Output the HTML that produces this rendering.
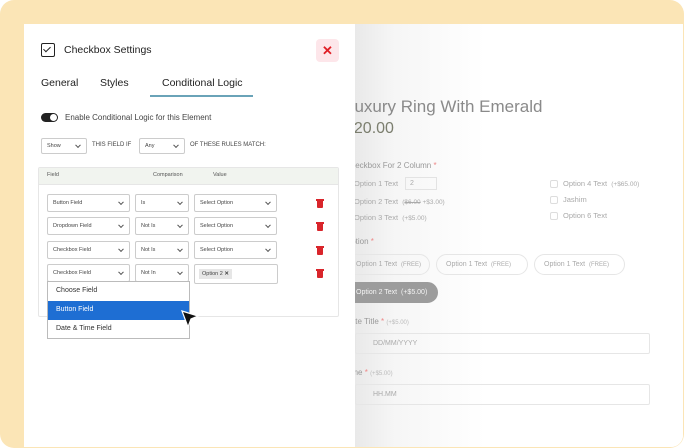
<!DOCTYPE html>
<html><head><meta charset="utf-8"><style>
*{margin:0;padding:0;box-sizing:border-box}
body{width:684px;height:448px;overflow:hidden;background:#fff;font-family:"Liberation Sans",sans-serif;position:relative}
.bg{position:absolute;left:0;top:0;width:684px;height:448px;background:#fbe5b6;border-radius:14px}
.card{position:absolute;left:24px;top:24px;width:659px;height:423px;background:#fff;border-radius:0 0 12px 0;overflow:hidden}
.right{position:absolute;left:331px;top:0;width:328px;height:423px;background:linear-gradient(90deg,#e9e9e9 0,#f6f6f6 40px,#fff 130px)}
.a{position:absolute;white-space:nowrap}
.g{color:#aaa;font-size:7.5px}
.left{position:absolute;left:0;top:0;width:331px;height:423px;background:#fff}
.sel{position:absolute;border:1px solid #ccc;border-radius:2px;background:#fff;font-size:5.5px;color:#444;padding-left:5px;display:flex;align-items:center}
.sel:after{content:"";position:absolute;right:6px;top:50%;width:3px;height:3px;border-right:1px solid #555;border-bottom:1px solid #555;transform:translateY(-70%) rotate(45deg)}
.tr{position:absolute;left:293px;width:6px;height:7px;background:#d9252b;border-radius:0 0 1px 1px}
.tr:before{content:"";position:absolute;left:-1px;top:-2px;width:8px;height:1.5px;background:#d9252b}
.pill{position:absolute;height:21px;border:1px solid #e6e6e6;border-radius:11px;font-size:7px;color:#aaa;display:flex;align-items:center;padding-left:9px}
.inp{position:absolute;left:0;width:295px;height:21px;border:1px solid #e6e6e6;border-radius:2px;font-size:7px;color:#aaa;display:flex;align-items:center;padding-left:12px}
.cb{position:absolute;width:8px;height:8px;border:1px solid #ddd;border-radius:2px}
</style></head><body>
<div class="bg"></div>
<div class="card">
 <div class="right">
  <div class="a" style="left:-10px;top:73px;font-size:17px;color:#8a8a8a">Luxury Ring With Emerald</div>
  <div class="a" style="left:-10px;top:96px;font-size:16px;color:#7b7e6e">$20.00</div>
  <div class="a" style="left:-10px;top:137px;font-size:8px;color:#999">Checkbox For 2 Column <span style="color:#e88">*</span></div>
  <div class="a g" style="left:-1px;top:155px">Option 1 Text</div>
  <div class="a" style="left:50px;top:153px;width:32px;height:13px;border:1px solid #e3e3e3;font-size:7px;color:#aaa;padding:2px 4px">2</div>
  <div class="a g" style="left:-1px;top:173px">Option 2 Text &nbsp;<span style="font-size:6.5px">(<s>$6.00</s> +$3.00)</span></div>
  <div class="a g" style="left:-1px;top:189px">Option 3 Text &nbsp;<span style="font-size:6.5px">(+$5.00)</span></div>
  <div class="cb" style="left:195px;top:156px"></div><div class="a g" style="left:208px;top:155px">Option 4 Text &nbsp;<span style="font-size:6.5px">(+$65.00)</span></div>
  <div class="cb" style="left:195px;top:172px"></div><div class="a g" style="left:208px;top:171px">Jashim</div>
  <div class="cb" style="left:195px;top:188px"></div><div class="a g" style="left:208px;top:187px">Option 6 Text</div>
  <div class="a" style="left:-10px;top:213px;font-size:8px;color:#999">Option <span style="color:#e88">*</span></div>
  <div class="pill" style="left:-30px;top:230px;width:105px;padding-left:30px">Option 1 Text &nbsp;<span style="font-size:6px">(FREE)</span></div>
  <div class="pill" style="left:81px;top:230px;width:92px">Option 1 Text &nbsp;<span style="font-size:6px">(FREE)</span></div>
  <div class="pill" style="left:179px;top:230px;width:91px">Option 1 Text &nbsp;<span style="font-size:6px">(FREE)</span></div>
  <div class="pill" style="left:-30px;top:258px;width:113px;padding-left:30px;background:#9c9c9c;border-color:#9c9c9c;color:#f4f4f4">Option 2 Text &nbsp;(+$5.00)</div>
  <div class="a" style="left:-10px;top:293px;font-size:8px;color:#999">Date Title <span style="color:#e88">*</span> <span style="font-size:6px;color:#bbb">(+$5.00)</span></div>
  <div class="inp" style="top:309px;padding-left:17px">DD/MM/YYYY</div>
  <div class="a" style="left:-10px;top:344px;font-size:8px;color:#999">Time <span style="color:#e88">*</span> <span style="font-size:6px;color:#bbb">(+$5.00)</span></div>
  <div class="inp" style="top:360px;padding-left:17px">HH.MM</div>
 </div>
 <div class="left">
  <div class="a" style="left:17px;top:19px;width:14px;height:14px;border:1.5px solid #222;border-radius:2px"><div style="position:absolute;left:3px;top:1px;width:4px;height:7px;border-right:1.5px solid #222;border-bottom:1.5px solid #222;transform:rotate(45deg)"></div></div>
  <div class="a" style="left:40px;top:20px;font-size:10.5px;color:#222">Checkbox Settings</div>
  <div class="a" style="left:292px;top:15px;width:23px;height:23px;background:#fde6ea;border-radius:4px;color:#e01f26;font-size:13px;font-weight:bold;text-align:center;line-height:23px">✕</div>
  <div class="a" style="left:17px;top:53px;font-size:10.5px;color:#222">General</div>
  <div class="a" style="left:76px;top:53px;font-size:10.5px;color:#222">Styles</div>
  <div class="a" style="left:138px;top:53px;font-size:10.5px;color:#222">Conditional Logic</div>
  <div class="a" style="left:126px;top:71px;width:103px;height:2px;background:#6aa3b8"></div>
  <div class="a" style="left:17px;top:89px;width:17px;height:9px;background:#222;border-radius:5px"><div style="position:absolute;right:1px;top:1px;width:7px;height:7px;background:#fff;border-radius:50%"></div></div>
  <div class="a" style="left:41px;top:89px;font-size:8px;color:#444">Enable Conditional Logic for this Element</div>
  <div class="sel" style="left:17px;top:114px;width:46px;height:16px">Show</div>
  <div class="a" style="left:68px;top:118px;font-size:6px;color:#444">THIS FIELD IF</div>
  <div class="sel" style="left:115px;top:114px;width:46px;height:16px">Any</div>
  <div class="a" style="left:166px;top:118px;font-size:6px;color:#444">OF THESE RULES MATCH:</div>
  <div class="a" style="left:14px;top:143px;width:301px;height:150px;border:1px solid #e6e6e6;border-radius:2px"></div>
  <div class="a" style="left:15px;top:144px;width:299px;height:17px;background:#f1f4ef;border-bottom:1px solid #e6e6e6"></div>
  <div class="a" style="left:23px;top:148px;font-size:5.5px;color:#555">Field</div>
  <div class="a" style="left:129px;top:148px;font-size:5.5px;color:#555">Comparison</div>
  <div class="a" style="left:189px;top:148px;font-size:5.5px;color:#555">Value</div>

  <div class="sel" style="left:23px;top:170px;width:83px;height:18px">Button Field</div>
  <div class="sel" style="left:111px;top:170px;width:54px;height:18px">Is</div>
  <div class="sel" style="left:170px;top:170px;width:83px;height:18px">Select Option</div>
  <div class="tr" style="top:177px"></div>
  <div class="sel" style="left:23px;top:193px;width:83px;height:18px">Dropdown Field</div>
  <div class="sel" style="left:111px;top:193px;width:54px;height:18px">Not Is</div>
  <div class="sel" style="left:170px;top:193px;width:83px;height:18px">Select Option</div>
  <div class="tr" style="top:200px"></div>
  <div class="sel" style="left:23px;top:217px;width:83px;height:18px">Checkbox Field</div>
  <div class="sel" style="left:111px;top:217px;width:54px;height:18px">Not Is</div>
  <div class="sel" style="left:170px;top:217px;width:83px;height:18px">Select Option</div>
  <div class="tr" style="top:224px"></div>
  <div class="sel" style="left:23px;top:240px;width:83px;height:18px">Checkbox Field</div>
  <div class="sel" style="left:111px;top:240px;width:54px;height:18px">Not In</div>
  <div class="a" style="left:170px;top:240px;width:84px;height:20px;border:1px solid #ccc;border-radius:2px"><div style="position:absolute;left:4px;top:4px;height:10px;padding:0 3px;background:#e6e6e6;font-size:5.5px;color:#444;line-height:10px">Option 2 <b>✕</b></div></div>
  <div class="tr" style="top:247px"></div>

  <div class="a" style="left:23px;top:257px;width:143px;height:58px;background:#fff;border:1px solid #bbb">
   <div class="a" style="left:8px;top:5px;font-size:7px;color:#333">Choose Field</div>
   <div class="a" style="left:0;top:19px;width:141px;height:19px;background:#1e6ed3"></div>
   <div class="a" style="left:8px;top:24px;font-size:7px;color:#fff">Button Field</div>
   <div class="a" style="left:8px;top:43px;font-size:7px;color:#333">Date &amp; Time Field</div>
  </div>
  <svg class="a" style="left:155px;top:284px" width="22" height="22" viewBox="0 0 22 22"><path d="M3 3 L19 8 L12 11 L9 19 Z" fill="#111" stroke="#fff" stroke-width="1.2"/></svg>
 </div>
</div>
</body></html>
